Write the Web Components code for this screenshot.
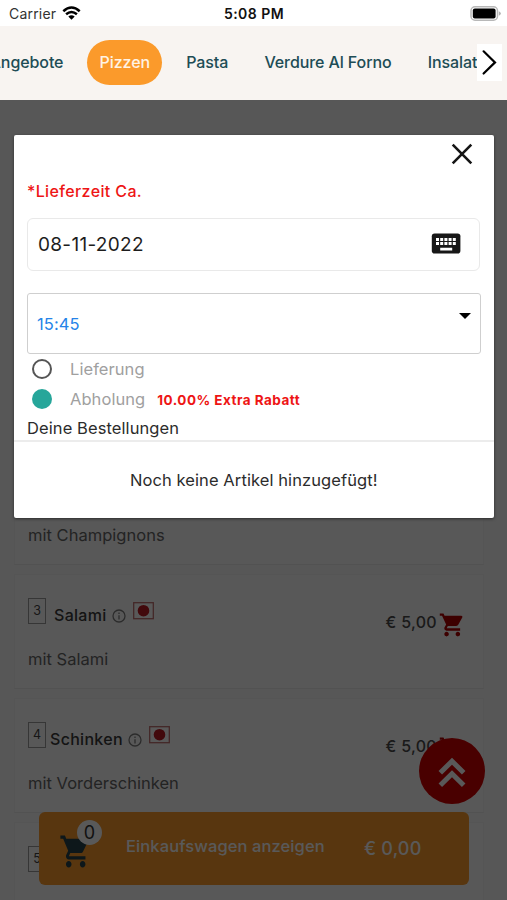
<!DOCTYPE html>
<html lang="de">
<head>
<meta charset="utf-8">
<title>Pizzen</title>
<style>
html,body{margin:0;height:900px;overflow:hidden}
body{font-family:Inter,"Liberation Sans",sans-serif;background:#fff}
</style>
</head>
<body>
<order-app></order-app>
<script>
const define = (name, html) => customElements.define(name, class extends HTMLElement {
  connectedCallback() {
    if (this.shadowRoot) return;
    const t = document.createElement('template');
    t.innerHTML = typeof html === 'function' ? html(this) : html;
    this.attachShadow({mode: 'open'}).append(t.content.cloneNode(true));
  }
});
const CART = 'M7 18c-1.1 0-1.99.9-1.99 2S5.9 22 7 22s2-.9 2-2-.9-2-2-2zM1 2v2h2l3.6 7.59-1.35 2.45c-.16.28-.25.61-.25.96 0 1.1.9 2 2 2h12v-2H7.42c-.14 0-.25-.11-.25-.25l.03-.12.9-1.63h7.45c.75 0 1.41-.41 1.75-1.03l3.58-6.49A1.003 1.003 0 0 0 20 4H5.21l-.94-2H1zm16 16c-1.1 0-1.99.9-1.99 2s.89 2 1.99 2 2-.9 2-2-.9-2-2-2z';

define('status-bar', `
<style>
:host{display:grid;grid-template-columns:1fr auto 1fr;align-items:center;height:26px;padding:2px 6px 0 9px;box-sizing:border-box;background:#fff;color:#111;font-size:14px;line-height:20px}
.l{display:flex;align-items:center;gap:6px;letter-spacing:.2px;color:#333}
.t{font-weight:600;letter-spacing:.45px;color:#111;margin-right:2px}
.r{display:flex;justify-content:flex-end}
svg{display:block}
</style>
<div class="l"><span>Carrier</span><svg width="19" height="14" viewBox="0 0 19 14" fill="none" stroke="#000" stroke-width="2.5" style="margin-top:-3px"><path d="M1.3 5.2Q9.5-2.2 17.7 5.2M4.1 8.3Q9.5 3.6 14.9 8.3"/><path d="M6.3 10.4Q9.5 7.9 12.7 10.4L9.5 13.7z" fill="#000" stroke="none"/></svg></div>
<div class="t">5:08 PM</div>
<div class="r"><svg width="31" height="15" viewBox="0 0 31 15" style="margin-top:-2px"><rect x="1" y=".8" width="26.5" height="13.4" rx="4" fill="#fff" stroke="#b8b8b8" stroke-width="1.5"/><rect x="2.8" y="2.6" width="22.8" height="9.8" rx="2" fill="#000"/><path d="M28.8 5.2q2 .8 2 2.3t-2 2.3z" fill="#b0b0b0"/></svg></div>`);

define('nav-item', `
<style>
:host{display:block;flex:none;padding:0 12.2px;height:45px;line-height:45px;border-radius:23px;font-size:16px;font-weight:500;letter-spacing:-.09px;color:#204c55;white-space:nowrap}
:host([active]){background:#fb9a2b;color:#fff3e4}
</style><slot></slot>`);

define('category-nav', `
<style>
:host{display:flex;align-items:center;position:relative;height:74px;box-sizing:border-box;overflow:hidden;background:#f8f4f1;padding-bottom:1px}
.track{display:flex;gap:11.8px;margin-left:-22.6px;width:max-content}
.next{position:absolute;right:5px;top:18px;width:25px;height:37px;background:#fff}
svg{display:block}
</style>
<div class="track"><slot></slot></div>
<div class="next"><svg width="25" height="37" viewBox="0 0 25 37"><path d="M6.6 7.3L18 18.4 6.6 29.5" fill="none" stroke="#000" stroke-width="2.2" stroke-linecap="round"/></svg></div>`);

define('menu-card', el => `
<style>
:host{display:block;height:115px;box-sizing:border-box;border:1px solid #f2f2f2;border-bottom-color:#ebebeb;background:#fcfcfc;padding:23px 18.5px 0 13px}
.head{display:flex;height:40px;align-items:flex-start}
.code{box-sizing:border-box;width:18px;height:26px;border:1.5px solid #9a9a9a;text-align:center;font-size:12.5px;line-height:24px;color:#444;flex:none}
.name{font-size:16px;font-weight:500;letter-spacing:.3px;line-height:24px;margin-top:5px;color:#3a3a3a}
.info{margin:11px 0 0 5.5px;flex:none}
.flag{margin:3.5px 0 0 6.5px;flex:none}
.price{margin-left:auto;margin-top:12px;font-size:16px;font-weight:500;letter-spacing:.3px;line-height:24px;color:#4a4a4a}
.cart{margin:14px 0 0 1.5px;flex:none}
.desc{margin-top:9px;font-size:16.5px;letter-spacing:.02px;line-height:24px;color:#666}
</style>
<div class="head">${el.hasAttribute('code') ? `<span class="code">${el.getAttribute('code')}</span>` : ''}
${el.hasAttribute('name') ? `<span class="name" style="margin-left:${el.getAttribute('gap')}px">${el.getAttribute('name')}</span>
<svg class="info" width="14" height="14" viewBox="0 0 14 14" fill="none" stroke="#7d7d7d" stroke-width="1.3"><circle cx="7" cy="7" r="6"/><path d="M7 6.2v4.2M7 3.5v1.4"/></svg>
<svg class="flag" width="21" height="18" viewBox="0 0 21 18"><rect x=".7" y=".7" width="19.6" height="16" fill="#fff" stroke="#c07070" stroke-width="1.3"/><circle cx="10.5" cy="8.7" r="5.8" fill="#bd1b24"/></svg>
<span class="price">€ 5,00</span><svg class="cart" width="26" height="26.5" viewBox="0.3 0.8 23 23" preserveAspectRatio="none" fill="#b00000"><path d="${CART}"/></svg>` : ''}</div>
<div class="desc"><slot></slot></div>`);

define('scroll-top', `
<style>:host{display:block;width:66px;height:66px;border-radius:50%;background:#d20000}svg{display:block}</style>
<svg width="66" height="66" viewBox="0 0 66 66" fill="none" stroke="#fff" stroke-width="5"><path d="M21.3 34.8L33 23.2l11.7 11.6M21.3 47.3L33 35.7l11.7 11.6"/></svg>`);

define('cart-bar', `
<style>
:host{display:flex;align-items:center;width:430px;height:73px;box-sizing:border-box;border-radius:6px;background:#fb9a2b;color:#fff;font-weight:500;padding-left:20px}
.icon{position:relative;width:48px;height:58px;flex:none}
.icon svg{position:absolute;left:0;top:14px}
.count{position:absolute;left:18px;top:0;width:25px;height:25px;border-radius:50%;background:#fff;color:#333;font-size:18px;font-weight:400;line-height:25px;text-align:center}
.label{margin:-6px 0 0 19px;width:238px;font-size:16.5px;letter-spacing:.1px;line-height:24px}
.sum{font-size:18px;letter-spacing:.2px;line-height:24px}
</style>
<div class="icon"><svg width="32" height="35" viewBox="0 1 23 22" preserveAspectRatio="none" fill="#27424a"><path d="${CART}"/></svg><span class="count">0</span></div>
<span class="label">Einkaufswagen anzeigen</span><span class="sum">€ 0,00</span>`);

define('date-field', `
<style>
:host{display:flex;align-items:center;justify-content:space-between;height:53px;box-sizing:border-box;border:1.5px solid #e9e9e9;border-radius:6px;padding:0 18px 0 10px;font-size:19px;letter-spacing:.3px;color:#1d1d1d}
svg{margin-top:-3px}
</style><slot></slot>
<svg width="30" height="21" viewBox="0 0 30 21"><rect x=".8" y=".5" width="28.6" height="20" rx="2.8" fill="#171717"/><g fill="#fff"><path d="M5 5h3v3H5zM9.2 5h3v3h-3zM13.4 5h3v3h-3zM17.6 5h3v3h-3zM21.8 5h3v3h-3zM5 9.1h3v3H5zM9.2 9.1h3v3h-3zM13.4 9.1h3v3h-3zM17.6 9.1h3v3h-3zM21.8 9.1h3v3h-3zM9.2 14.8h12v2.7h-12z"/></g></svg>`);

define('time-select', `
<style>
:host{display:flex;justify-content:space-between;height:61px;box-sizing:border-box;border:1.5px solid #cfcfcf;border-radius:3px;padding:0 9px 0 9px;font-size:16.5px;line-height:60px;color:#2583e8}
svg{margin-top:19px}
</style><slot></slot><svg width="12" height="6" viewBox="0 0 12 6"><path d="M0 0h12L6 6z"/></svg>`);

define('radio-option', `
<style>
:host{display:flex;align-items:center;height:30.5px;padding-left:5px;font-size:16.5px;letter-spacing:.06px;color:#a0a0a0}
i{box-sizing:border-box;width:20px;height:20px;border:2.5px solid #555;border-radius:50%;margin-right:18px;flex:none}
:host([checked]) i{border:0;background:#26a69a}
::slotted(b){margin:2px 0 0 12px;font-size:13.5px;font-weight:700;letter-spacing:.48px;color:#ee1515}
</style><i></i><slot></slot>`);

define('order-dialog', `
<style>
:host{display:flex;flex-direction:column;width:479.5px;height:382.5px;box-sizing:border-box;border-radius:2px;background:#fff;color:#2c2c2c;font-size:16.5px;letter-spacing:.09px}
.close{align-self:flex-end;margin:7px 20px 0 0;height:24px}
svg{display:block}
.title{margin:12.5px 13px 0;height:24px;line-height:24px;font-size:16px;font-weight:500;letter-spacing:.37px;color:#ee1515}
.form{margin:15.5px 13px 0 13px;display:flex;flex-direction:column}
.form date-field{margin-bottom:22px;margin-right:.5px}
.form radio-option[checked]{margin-top:-.5px}
.orders{height:27px;box-sizing:border-box;padding-left:13px;line-height:26px;border-bottom:2px solid #ececec}
.empty{flex:1;display:flex;align-items:center;justify-content:center;padding-top:1px}
</style>
<div class="close"><svg width="24" height="24" viewBox="0 0 24 24"><path d="M2.7 2.7l18.6 18.6M21.3 2.7L2.7 21.3" stroke="#151515" stroke-width="2.6" stroke-linecap="butt"/></svg></div>
<div class="title">*Lieferzeit Ca.</div>
<div class="form"><date-field>08-11-2022</date-field><time-select>15:45</time-select>
<radio-option>Lieferung</radio-option><radio-option checked>Abholung<b>10.00% Extra Rabatt</b></radio-option></div>
<div class="orders">Deine Bestellungen</div>
<div class="empty">Noch keine Artikel hinzugefügt!</div>`);

define('order-app', `
<style>
:host{display:flex;flex-direction:column;width:507px;height:900px;overflow:hidden}
.page{position:relative;flex:1;min-height:0;overflow:hidden;background:#fafafa}
.list{display:flex;flex-direction:column;gap:9px;padding:350px 23px 0 14px}
cart-bar{position:absolute;left:39px;top:712px}
scroll-top{position:absolute;left:419px;top:637.5px}
.veil{position:absolute;inset:0;background:rgba(0,0,0,.65)}
order-dialog{position:absolute;left:14px;top:35px;box-shadow:0 1px 3px rgba(0,0,0,.5)}
</style>
<status-bar></status-bar>
<category-nav><nav-item>Angebote</nav-item><nav-item active>Pizzen</nav-item><nav-item>Pasta</nav-item><nav-item>Verdure Al Forno</nav-item><nav-item>Insalate</nav-item></category-nav>
<div class="page">
<div class="list">
<menu-card>mit Champignons</menu-card>
<menu-card code="3" name="Salami" gap="8">mit Salami</menu-card>
<menu-card code="4" name="Schinken" gap="4">mit Vorderschinken</menu-card>
<menu-card code="5">mit Hackfleisch</menu-card>
</div>
<cart-bar></cart-bar><scroll-top></scroll-top>
<div class="veil"></div>
<order-dialog></order-dialog>
</div>`);
</script>
</body>
</html>
